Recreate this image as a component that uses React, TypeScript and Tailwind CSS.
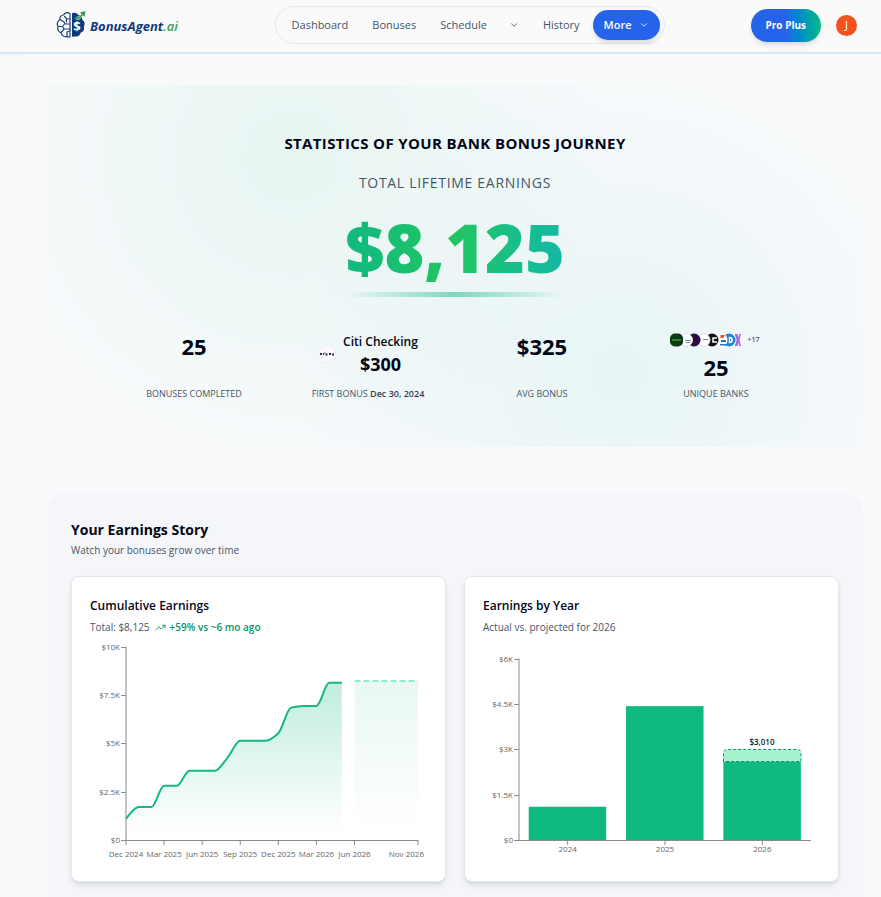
import React from 'react';
import { ChevronDown, TrendingUp } from 'lucide-react';

type Point = [number, number];

const axisLabel = 'fill-[#666666] text-[8px]';

const cumulative = [
  1100, 1700, 1700, 2800, 2800, 3580, 3580, 3580, 4260, 5130, 5130, 5130, 5520, 6840, 6930, 6930, 8125, 8125,
];

const monthTicks = [
  { month: 0, label: 'Dec 2024' },
  { month: 3, label: 'Mar 2025' },
  { month: 6, label: 'Jun 2025' },
  { month: 9, label: 'Sep 2025' },
  { month: 12, label: 'Dec 2025' },
  { month: 15, label: 'Mar 2026' },
  { month: 18, label: 'Jun 2026' },
  { month: 23, label: 'Nov 2026' },
];

const years = [
  { label: '2024', value: 1100 },
  { label: '2025', value: 4425 },
  { label: '2026', value: 2600 },
];

// Monotone cubic interpolation, so flat months stay flat
const monotonePath = (pts: Point[]) => {
  const slopes = pts.slice(1).map((p, i) => (p[1] - pts[i][1]) / (p[0] - pts[i][0]));
  const tangents = pts.map((_, i) => {
    if (i === 0) return slopes[0] * 1.2;
    if (i === pts.length - 1) return slopes[i - 1];
    const a = slopes[i - 1];
    const b = slopes[i];
    if (a * b <= 0) return 0;
    return (2 * a * b) / (a + b);
  });
  let d = `M${pts[0][0]},${pts[0][1]}`;
  for (let i = 0; i < pts.length - 1; i++) {
    const [x0, y0] = pts[i];
    const [x1, y1] = pts[i + 1];
    const h = (x1 - x0) / 3;
    d += `C${x0 + h},${y0 + tangents[i] * h},${x1 - h},${y1 - tangents[i + 1] * h},${x1},${y1}`;
  }
  return d;
};

const Logo: React.FC = () => (
  <a href="#" className="flex items-center gap-1" aria-label="BonusAgent.ai">
    <svg width="30" height="28" viewBox="0 0 30 28" fill="none">
      <g stroke="#1d4480" strokeWidth="1.2" strokeLinecap="round">
        <path d="M14 2.5C11 .8 8.3 2 7.6 4 5 4 3.400 6 4 8.500 1.300 10 .6 13 2 15.500c-1 3 .5 5.500 3 6.200.6 3 3.500 4.800 6 3.800 1 .8 2 .8 3 .2z" />
        <path d="M14 8h-3L8.500 5.500M4.500 9l3 1.500 2 2.500H14M2.500 15.500h4l2-2.500M5.500 21l2.500-3h6M11 25v-4l3-1M10.500 8v3M6.500 15.500l1.500 2.500" />
      </g>
      <path
        d="M16 2.300c3-1.200 5.500 0 6.400 1.800 2.600.2 4.200 2.200 3.800 4.600 2.500 1.500 3.100 4.500 1.700 6.900.8 3-.6 5.400-3.100 6-.7 3-3.600 4.600-6 3.700-1 .7-1.900.7-2.800.3z"
        fill="#0f3a7d"
      />
      <path d="M20 7.500 21.500 7l1 .5L28 2" stroke="#fafafa" strokeWidth="2.600" />
      <path d="M19 8 21 6.500l1.500 1L27 3" stroke="#2f9e55" strokeWidth="1.600" />
      <path d="M24 1.500 29.500 0 28.500 6z" fill="#2f9e55" />
      <text x="21" y="20" textAnchor="middle" className="fill-white text-[13px] font-bold">
        $
      </text>
    </svg>
    <span className="pt-px text-[13px] leading-5 font-bold text-[#15397a] italic">
      BonusAgent<span className="font-semibold text-[#3b9f58]">.ai</span>
    </span>
  </a>
);

const Header: React.FC = () => (
  <header className="flex items-center border-b-2 border-[#d6e5f8] bg-[#fafafa] pt-[6px] pr-6 pb-2 pl-14 shadow-xs">
    <Logo />
    <nav className="ml-auto flex items-center rounded-full border border-[#e2e8f0] py-[3px] pr-1 pl-[5px] text-[11px] font-medium text-[#475569]">
      <a href="#" className="px-[11px]">Dashboard</a>
      <a href="#" className="ml-[2px] px-[11px]">Bonuses</a>
      <a href="#" className="ml-[2px] px-[11px]">Schedule</a>
      <button className="px-[11px]" aria-label="Schedule options">
        <ChevronDown size={10} />
      </button>
      <a href="#" className="ml-[2px] px-[11px]">History</a>
      <button className="ml-[2px] flex h-[30px] items-center gap-[7px] rounded-full bg-[#2563eb] px-[11px] font-semibold text-white shadow-md">
        More
        <ChevronDown size={10} />
      </button>
    </nav>
    <div className="ml-[86px] flex items-center gap-[15px]">
      <button className="h-[33px] rounded-full bg-linear-to-r from-[#2563eb] from-50% to-[#10b981] px-[15px] text-[10px] font-bold whitespace-nowrap text-white shadow-md">
        Pro Plus
      </button>
      <button className="size-[21px] rounded-full bg-[#f4511e] text-[11px] text-white">J</button>
    </div>
  </header>
);

const BankStack: React.FC = () => (
  <div className="flex h-4 items-center">
    <svg width="75" height="14" viewBox="0 0 75 14" className="shrink-0">
      <rect x="0" y="0" width="76" height="14" rx="7" fill="#f4f6fa" />
      <path d="M66 1h6l-1.500 6 1.500 6h-6z" fill="#a56be0" />
      <path d="M68.500 1h2l-1 3.500zM68.500 13h2l-1-3.500z" fill="#efe6fb" />
      <circle cx="60" cy="7" r="7.500" fill="#f8fafc" />
      <circle cx="60" cy="7" r="6.500" fill="#2085d8" />
      <path d="M60.500 4.500c3.500 0 3.500 5 0 5z" fill="#2085d8" stroke="#fff" strokeWidth="1.500" />
      <circle cx="51.500" cy="7" r="7" fill="#fff" />
      <path d="M52 7h5v2h-5zM51 11h6v1.500h-6z" fill="#2a73c4" />
      <path d="M51.500 2h4.500l-1.500 3h-3z" fill="#ef4b3c" />
      <circle cx="43" cy="7" r="7" fill="#f8fafc" />
      <circle cx="43" cy="7" r="6.500" fill="#111" />
      <path d="M48 5h-4v4h4" stroke="#fff" strokeWidth="1.500" fill="none" />
      <circle cx="34.500" cy="7" r="6.500" fill="#fff" stroke="#ddd" />
      <path d="M34 6.500h5" stroke="#888" />
      <circle cx="25" cy="7" r="7" fill="#eee" />
      <circle cx="25" cy="7" r="6.500" fill="#2a0d45" />
      <circle cx="17" cy="7" r="6.500" fill="#fff" stroke="#ddd" />
      <path d="M16 7.500h6M17 9.500h4" stroke="#5c7fb8" />
      <rect x="0" y="0" width="15" height="14" rx="6" fill="#eef2f4" />
      <rect x="1" y=".5" width="13" height="13" rx="5" fill="#083b12" />
      <path d="M3 7h9" stroke="#4f9440" strokeWidth="1.500" />
    </svg>
    <span className="rounded-full bg-[#f4f6fa] px-[3px] text-[7px] leading-[14px] font-semibold text-[#475569]">
      +17
    </span>
  </div>
);

const CitiLogo: React.FC = () => (
  <svg width="18" height="18" viewBox="0 0 18 18">
    <rect x=".5" y=".5" width="17" height="17" rx="7" fill="#fbf9fb" stroke="#eceff4" />
    <path d="M2 9h2M5 9h1M7.500 9.500h2M11 9h2M14 9.500h2" stroke="#27265e" strokeWidth="2" />
    <path d="M6 8h2" stroke="#d35a6d" />
  </svg>
);

const Stat: React.FC<{ label: React.ReactNode; children: React.ReactNode }> = ({ label, children }) => (
  <div className="flex flex-col items-center">
    <div className="flex h-14 flex-col items-center">{children}</div>
    <div className="text-[9px] leading-3 whitespace-nowrap text-[#475569]">{label}</div>
  </div>
);

const Hero: React.FC = () => (
  <section className="bg-[radial-gradient(circle_at_30%_20%,rgba(16,185,129,0.08),transparent_50%),radial-gradient(circle_at_70%_80%,rgba(20,184,166,0.08),transparent_50%)] py-[47px] text-center">
    <h1 className="text-[15px] leading-[22px] font-bold tracking-wide text-[#020617]">
      STATISTICS OF YOUR BANK BONUS JOURNEY
    </h1>
    <p className="mt-[19px] text-[14px] leading-5 font-medium tracking-wider text-[#475569]">TOTAL LIFETIME EARNINGS</p>
    <div className="mx-auto mt-4 w-fit">
      <div className="bg-linear-to-r from-[#10b981] via-[#22c55e] to-[#14b8a6] bg-clip-text text-[68px] leading-[76px] font-extrabold text-transparent">
        $8,125
      </div>
      <div className="mt-[7px] h-[5px] bg-linear-to-r from-transparent via-[#10b981]/50 to-transparent" />
    </div>
    <div className="mx-auto mt-[35px] grid max-w-2xl grid-cols-4 gap-6">
      <Stat label="BONUSES COMPLETED">
        <span className="text-[22px] leading-7 font-bold text-[#020617]">25</span>
      </Stat>
      <Stat
        label={
          <>
            FIRST BONUS <span className="font-semibold text-[#334155]">Dec 30, 2024</span>
          </>
        }
      >
        <div className="flex items-center gap-[7px]">
          <CitiLogo />
          <div className="whitespace-nowrap text-[#020617]">
            <div className="text-[12px] leading-5 font-semibold">Citi Checking</div>
            <div className="text-[18px] leading-6 font-bold">$300</div>
          </div>
        </div>
      </Stat>
      <Stat label="AVG BONUS">
        <span className="text-[22px] leading-7 font-bold text-[#020617]">$325</span>
      </Stat>
      <Stat label="UNIQUE BANKS">
        <BankStack />
        <span className="mt-[5px] text-[22px] leading-7 font-bold text-[#020617]">25</span>
      </Stat>
    </div>
  </section>
);

const CumulativeChart: React.FC = () => {
  const x = (month: number) => 36 + (month * 292) / 23;
  const y = (value: number) => 200 - value * 0.01935;
  const line = monotonePath(cumulative.map((v, i): Point => [x(i), y(v)]));
  const lastX = x(cumulative.length - 1);

  return (
    <svg viewBox="0 0 337 224" className="block w-full" role="img" aria-label="Cumulative earnings">
      <defs>
        <linearGradient id="actual" x1="0" y1="0" x2="0" y2="1">
          <stop offset="5%" stopColor="#10b981" stopOpacity="0.25" />
          <stop offset="95%" stopColor="#10b981" stopOpacity="0" />
        </linearGradient>
        <linearGradient id="projected" x1="0" y1="0" x2="0" y2="1">
          <stop offset="5%" stopColor="#10b981" stopOpacity="0.09" />
          <stop offset="95%" stopColor="#10b981" stopOpacity="0" />
        </linearGradient>
      </defs>
      {[10000, 7500, 5000, 2500].map((v) => (
        <path key={v} d={`M36 ${y(v)}H328`} stroke="#f8fafc" strokeDasharray="3 3" />
      ))}
      <path d={`${line}V200H36Z`} fill="url(#actual)" />
      <path d={line} fill="none" stroke="#10b981" strokeWidth="2" />
      <path d={`M${lastX + 12.7} 41H328V200H${lastX + 12.7}Z`} fill="url(#projected)" />
      <path d={`M${lastX + 12.7} 41H328`} stroke="#6ee7b7" strokeWidth="1.500" strokeDasharray="6 3" />
      <path d="M36 6.500V200.500H328" fill="none" stroke="#8a8a8a" />
      {[10000, 7500, 5000, 2500, 0].map((v) => (
        <g key={v}>
          <path d={`M31 ${Math.round(y(v)) + 0.5}H36`} stroke="#8a8a8a" />
          <text x="30" y={y(v) + 3} textAnchor="end" className={axisLabel}>
            {v === 0 ? '$0' : `$${v / 1000}K`}
          </text>
        </g>
      ))}
      {monthTicks.map((t) => (
        <g key={t.label}>
          <path d={`M${x(t.month)} 200V205`} stroke="#8a8a8a" />
          <text
            x={t.month === 23 ? 334 : x(t.month)}
            y="217"
            textAnchor={t.month === 23 ? 'end' : 'middle'}
            className={axisLabel}
          >
            {t.label}
          </text>
        </g>
      ))}
    </svg>
  );
};

const YearChart: React.FC = () => {
  const y = (value: number) => 190 - value * 0.03025;
  const band = 292 / 3;

  return (
    <svg viewBox="0 0 337 214" className="block w-full" role="img" aria-label="Earnings by year">
      {[6000, 4500, 3000, 1500].map((v) => (
        <path key={v} d={`M36 ${y(v)}H328`} stroke="#f8fafc" strokeDasharray="3 3" />
      ))}
      {years.map((d, i) => (
        <rect key={d.label} x={36 + band * i + 9.7} y={y(d.value)} width="77.5" height={190 - y(d.value)} fill="#10b981" />
      ))}
      <path
        d="M240.500 111.500V103.500Q240.500 99.500 244.500 99.500H314Q318 99.500 318 103.500V111.500Z"
        fill="#a7f3d0"
        stroke="#059669"
        strokeDasharray="3 2"
      />
      <text x="279" y="95" textAnchor="middle" className="fill-[#0f172a] text-[8px] font-semibold">
        $3,010
      </text>
      <path d="M36 8.500V190.500H328" fill="none" stroke="#8a8a8a" />
      {[6000, 4500, 3000, 1500, 0].map((v) => (
        <g key={v}>
          <path d={`M31 ${Math.round(y(v)) + 0.5}H36`} stroke="#8a8a8a" />
          <text x="30" y={y(v) + 3} textAnchor="end" className={axisLabel}>
            {v === 0 ? '$0' : `$${v / 1000}K`}
          </text>
        </g>
      ))}
      {years.map((d, i) => (
        <g key={d.label}>
          <path d={`M${36 + band * (i + 0.5)} 190V195`} stroke="#8a8a8a" />
          <text x={36 + band * (i + 0.5)} y="202" textAnchor="middle" className={axisLabel}>
            {d.label}
          </text>
        </g>
      ))}
    </svg>
  );
};

const ChartCard: React.FC<{ title: string; subtitle: React.ReactNode; children: React.ReactNode }> = ({
  title,
  subtitle,
  children,
}) => (
  <article className="flex min-w-0 flex-col rounded-lg border border-[#e2e8f0] bg-white px-[18px] pt-[18px] pb-[17px] shadow-md">
    <h3 className="text-[12px] leading-[22px] font-semibold text-[#020617]">{title}</h3>
    <div className="mb-[3px] flex items-center text-[10px] leading-5 whitespace-nowrap text-[#475569]">{subtitle}</div>
    <div className="mt-auto">{children}</div>
  </article>
);

const EarningsStory: React.FC = () => (
  <section className="mt-[47px] rounded-2xl bg-[#f4f6fa] px-6 pt-6 pb-12">
    <h2 className="text-[14px] leading-6 font-bold text-[#020617]">Your Earnings Story</h2>
    <p className="text-[10px] leading-4 text-[#475569]">Watch your bonuses grow over time</p>
    <div className="mt-[18px] grid grid-cols-2 gap-[18px]">
      <ChartCard
        title="Cumulative Earnings"
        subtitle={
          <>
            <span>Total: $8,125</span>
            <TrendingUp size={11} className="mr-1 ml-[5px] text-[#059669]" />
            <span className="font-semibold text-[#059669]">+59% vs ~6 mo ago</span>
          </>
        }
      >
        <CumulativeChart />
      </ChartCard>
      <ChartCard title="Earnings by Year" subtitle="Actual vs. projected for 2026">
        <YearChart />
      </ChartCard>
    </div>
  </section>
);

const App: React.FC = () => (
  <div className="min-h-screen overflow-x-hidden bg-[#fafafa] font-['Open_Sans','Noto_Sans',sans-serif]">
    <Header />
    <main className="ml-[23px] bg-[#f9fafc] pt-[31px] pr-[18px] pl-6">
      <Hero />
      <EarningsStory />
    </main>
  </div>
);

export default App;
